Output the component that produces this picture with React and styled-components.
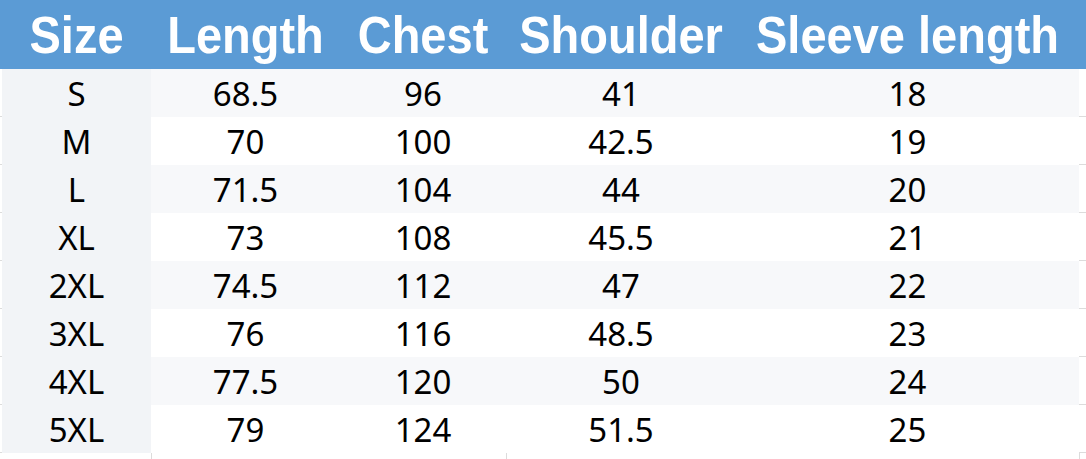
import React from 'react';
import styled, { createGlobalStyle } from 'styled-components';

const GlobalStyle = createGlobalStyle`
    html, body {
        margin: 0;
        padding: 0;
        background: #fff;
    }
`;

const columns = '2px 149px 189px 166px 230px 343px 1fr';

const Sheet = styled.div`
    width: 1086px;
    height: 459px;
    overflow: hidden;
    background: #fff;
`;

const HeaderRow = styled.div`
    display: grid;
    grid-template-columns: ${columns};
    height: 69px;
    background-color: #5B9BD5;
`;

const HeadCell = styled.div`
    display: flex;
    align-items: center;
    justify-content: center;
    white-space: nowrap;
    color: #fff;
    font-family: 'Liberation Sans', Arial, sans-serif;
    font-weight: 700;
    font-size: 47px;
`;

const HeadText = styled.span`
    display: inline-block;
    transform: scaleY(1.12);
`;

const Row = styled.div`
    display: grid;
    grid-template-columns: ${columns};
    height: 48px;
`;

const Cell = styled.div`
    display: flex;
    align-items: center;
    justify-content: center;
    font-family: 'Noto Sans', 'Open Sans', sans-serif;
    font-size: 33px;
    color: #000;
    background-color: ${({ $first, $odd }) =>
        $first ? '#F2F4F7' : $odd ? '#F7F8FA' : '#fff'};
`;

const Edge = styled.div`
    border-bottom: 1px solid #dcdcdc;
    box-sizing: border-box;
`;

const Foot = styled.div`
    display: grid;
    grid-template-columns: ${columns};
    height: 6px;
`;

const FootCell = styled.div`
    border-left: ${({ $line }) => ($line ? '1px solid #dcdcdc' : 'none')};
`;

const headers = ['Size', 'Length', 'Chest', 'Shoulder', 'Sleeve length'];

const rows = [
    ['S', '68.5', '96', '41', '18'],
    ['M', '70', '100', '42.5', '19'],
    ['L', '71.5', '104', '44', '20'],
    ['XL', '73', '108', '45.5', '21'],
    ['2XL', '74.5', '112', '47', '22'],
    ['3XL', '76', '116', '48.5', '23'],
    ['4XL', '77.5', '120', '50', '24'],
    ['5XL', '79', '124', '51.5', '25'],
];

const App = () => {
    return (
        <>
            <GlobalStyle />
            <Sheet>
                <HeaderRow>
                    <div />
                    {headers.map((h) => (
                        <HeadCell key={h}>
                            <HeadText>{h}</HeadText>
                        </HeadCell>
                    ))}
                    <div />
                </HeaderRow>
                {rows.map((r, i) => (
                    <Row key={r[0]}>
                        <Edge />
                        {r.map((v, j) => (
                            <Cell key={j} $first={j === 0} $odd={i % 2 === 0}>
                                {v}
                            </Cell>
                        ))}
                        <Edge />
                    </Row>
                ))}
                <Foot>
                    <FootCell />
                    <FootCell />
                    <FootCell $line />
                    <FootCell />
                    <FootCell $line />
                    <FootCell />
                    <FootCell $line />
                </Foot>
            </Sheet>
        </>
    );
};

export default App;
